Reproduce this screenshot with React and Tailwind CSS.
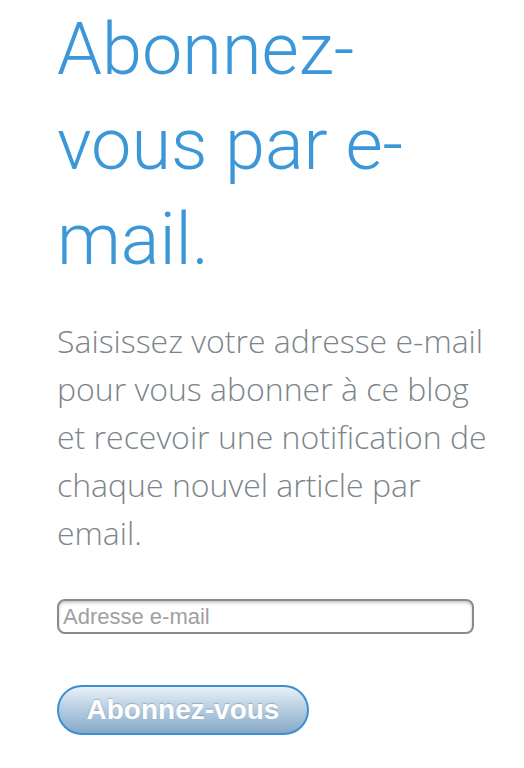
export default function App() {
  return (
    <div className="min-h-screen bg-white pl-[57px] pr-[30px]">
      {/* Titre */}
      <h1 className="pt-[2px] text-[72px] font-light leading-[95px] text-[#3b97d7] font-['Roboto',sans-serif]">
        Abonnez-
        <br />
        vous par e-
        <br />
        mail.
      </h1>

      {/* Description */}
      <p className="mt-[30px] w-[436px] text-[32px] font-light leading-[48px] text-[#7d8589] font-['Open_Sans',sans-serif]">
        Saisissez votre adresse e-mail pour vous abonner à ce blog et recevoir une notification de chaque nouvel article par email.
      </p>

      {/* Formulaire */}
      <form className="mt-[42px]">
        <input
          type="email"
          placeholder="Adresse e-mail"
          className="block h-[35px] w-[417px] rounded-[8px] border-2 border-[#868b8d] bg-white px-[4px] text-[22px] font-['Liberation_Sans',sans-serif] text-[#444] shadow-[inset_0_2px_3px_rgba(0,0,0,0.22)] outline-none placeholder:text-[#a0a0a0]"
        />
        <button
          type="button"
          className="mt-[51px] block h-[50px] w-[252px] rounded-full border-2 border-[#3b8fd2] bg-gradient-to-b from-[#eaf2f9] via-[#b3cbe0] to-[#88a9c6] text-[28px] font-bold text-white font-['Liberation_Sans',sans-serif] [text-shadow:0_-1px_1px_rgba(0,0,0,0.2)]"
        >
          Abonnez-vous
        </button>
      </form>
    </div>
  );
}
